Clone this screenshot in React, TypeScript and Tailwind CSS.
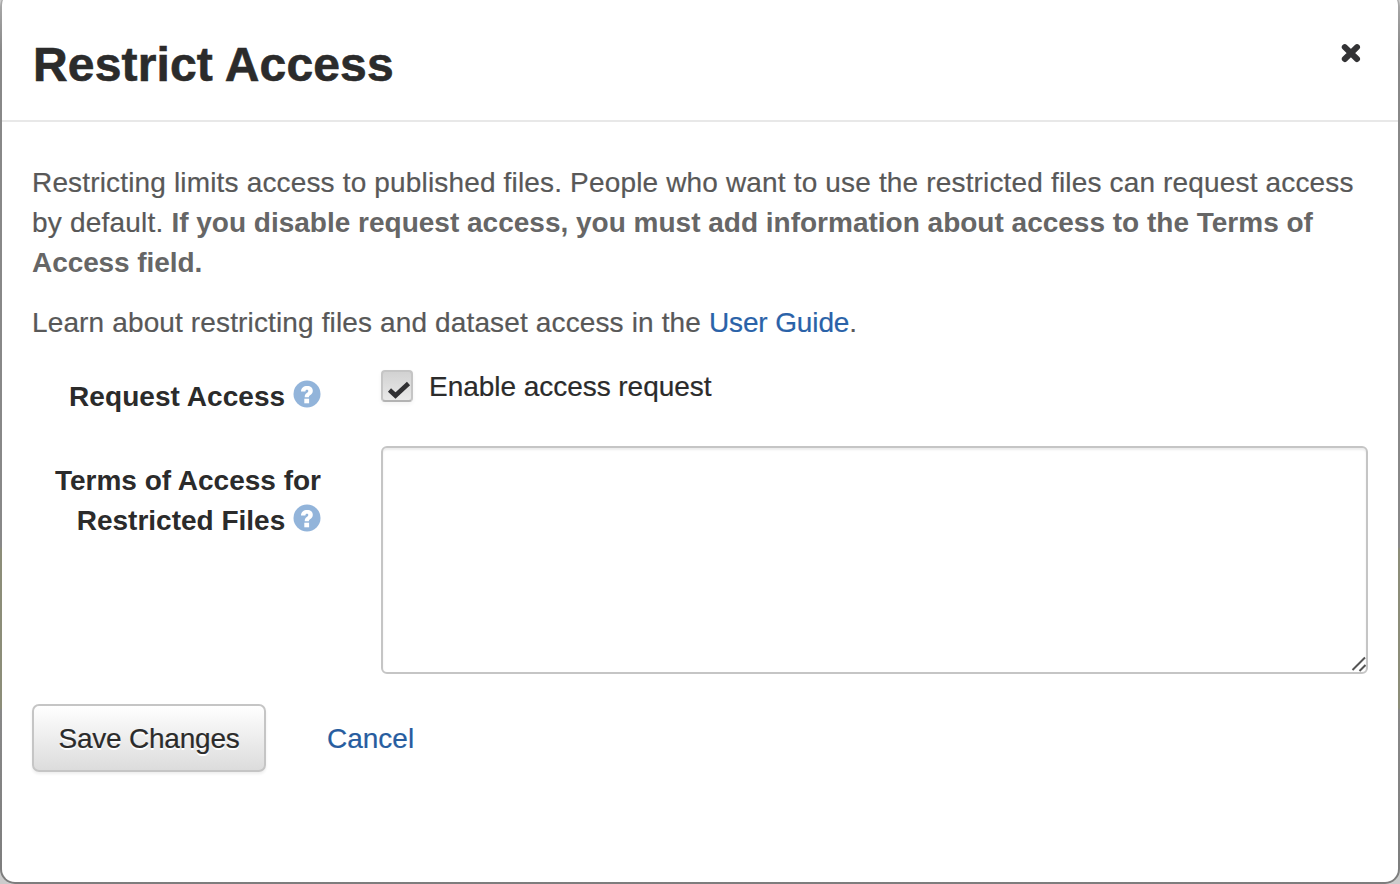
import React from "react";

function HelpIcon() {
  return (
    <svg className="inline-block h-[28px] w-[28px] align-[-2px]" viewBox="0 0 28 28" aria-hidden="true">
      <circle cx="14" cy="14" r="13.5" fill="#92b4da" />
      <path d="M8 11.6C8 7.9 10.5 6 14.2 6c3.5 0 5.6 1.8 5.6 4.8 0 2.1-1 3.3-2.4 4.2-1.1.7-1.5 1-1.5 2.2h-4.2c0-2.3.6-3.3 2.1-4.3 1-.7 1.5-1.1 1.5-1.9 0-.8-.5-1.2-1.3-1.2-1.100 0-1.600.6-1.600 1.800z" fill="#fff" />
      <rect x="11.300" y="18.700" width="4.800" height="4.600" fill="#fff" />
    </svg>
  );
}

export default function App() {
  return (
    <div className="h-[884px] w-[1400px] overflow-hidden bg-[#cccccc] font-['Liberation_Sans',Arial,sans-serif] text-[28px] leading-[40px] text-[#2b2b2b]">
      <div className="-mt-[8px] h-[892px] rounded-[15px] bg-[linear-gradient(to_bottom,#aaa_8px,#888_60px,#888_555px,#8c8d78_557px,#8c8d78_716px,#888_718px,#7d7d7d_892px)] px-[2px] pb-[2px]">
        <div className="h-[890px] rounded-[13px] bg-white">
          <header className="flex h-[130px] items-start justify-between border-b-2 border-[#e8e8e8] pl-[31px] pr-[37px]">
            <h1 className="mt-[43px] whitespace-nowrap text-[48px] font-bold leading-[60px] tracking-[0.16px] [-webkit-text-stroke:0.6px_#2b2b2b]">Restrict Access</h1>
            <button className="mt-[51px]" aria-label="Close">
              <svg className="h-[20px] w-[20px] blur-[0.4px]" viewBox="0 0 20 20">
                <path d="M3.800 4.200L16 16M16 4.200L3.800 16" stroke="#333335" strokeWidth="6" strokeLinecap="round" />
              </svg>
            </button>
          </header>
          <main className="px-[30px] pt-[41px]">
            <div className="whitespace-nowrap text-[#585858]">
              <p className="tracking-[0.162px] [-webkit-text-stroke:0.2px_#585858]">Restricting limits access to published files. People who want to use the restricted files can request access</p>
              <p><span className="tracking-[0.2px] [-webkit-text-stroke:0.2px_#585858]">by default. </span><b className="text-[#666]">If you disable request access, you must add information about access to the Terms of</b></p>
              <p><b className="tracking-[-0.08px] text-[#666]">Access field.</b></p>
              <p className="mt-[20px] [-webkit-text-stroke:0.2px_currentColor]"><span className="tracking-[0.136px]">Learn about restricting files and dataset access in the </span><a className="tracking-[-0.12px] text-[#2a62a8]">User Guide</a>.</p>
            </div>
            <div className="mt-[24px] flex h-[79px]">
              <label className="mt-[10px] w-[289px] whitespace-nowrap text-right font-bold"><span className="tracking-[0.06px]">Request Access</span> <HelpIcon /></label>
              <div className="ml-[60px] flex h-[40px] items-center">
                <span className="-mt-[2px] flex h-[32px] w-[32px] items-center justify-center rounded-[4px] border-2 border-[#c5c5c5] border-b-[#b3b3b3] bg-gradient-to-b from-[#d2d2d2] to-[#e9e9e9] shadow-[0_2px_4px_#0000000d]">
                  <svg className="ml-[4px] mt-[7px] h-[20px] w-[24px] shrink-0 blur-[0.4px]" viewBox="0 0 24 20"><path d="M2.500 10L8.500 15.500L21.500 3.500" fill="none" stroke="#303033" strokeWidth="4.600" /></svg>
                </span>
                <span className="ml-[16px] whitespace-nowrap tracking-[-0.04px] [-webkit-text-stroke:0.2px_#2b2b2b]">Enable access request</span>
              </div>
            </div>
            <div className="flex h-[228px]">
              <label className="mt-[15px] w-[289px] whitespace-nowrap text-right font-bold"><span>Terms of Access for</span><br /><span>Restricted Files</span> <HelpIcon /></label>
              <div className="ml-[60px] flex flex-1 items-end justify-end rounded-[6px] border-2 border-[#c5c5c5] shadow-[inset_0_2px_2px_#00000013]">
                <svg className="h-[16px] w-[16px]" viewBox="0 0 16 16"><path d="M2.500 14L15 1.500M9.500 15L15.500 9" stroke="#555" strokeWidth="2" /></svg>
              </div>
            </div>
            <div className="mt-[30px] flex h-[68px] items-center">
              <button className="h-[68px] w-[234px] whitespace-nowrap rounded-[7px] border-2 border-[#c5c5c5] bg-gradient-to-b from-white to-[#dcdcdc] pt-[2px] tracking-[-0.22px] shadow-[0_2px_3px_#00000012] [-webkit-text-stroke:0.2px_#2b2b2b] [text-shadow:0_2px_0_white]">Save Changes</button>
              <a className="ml-[61px] pt-[2px] text-[#275d9f] [-webkit-text-stroke:0.2px_#275d9f]">Cancel</a>
            </div>
          </main>
        </div>
      </div>
    </div>
  );
}
